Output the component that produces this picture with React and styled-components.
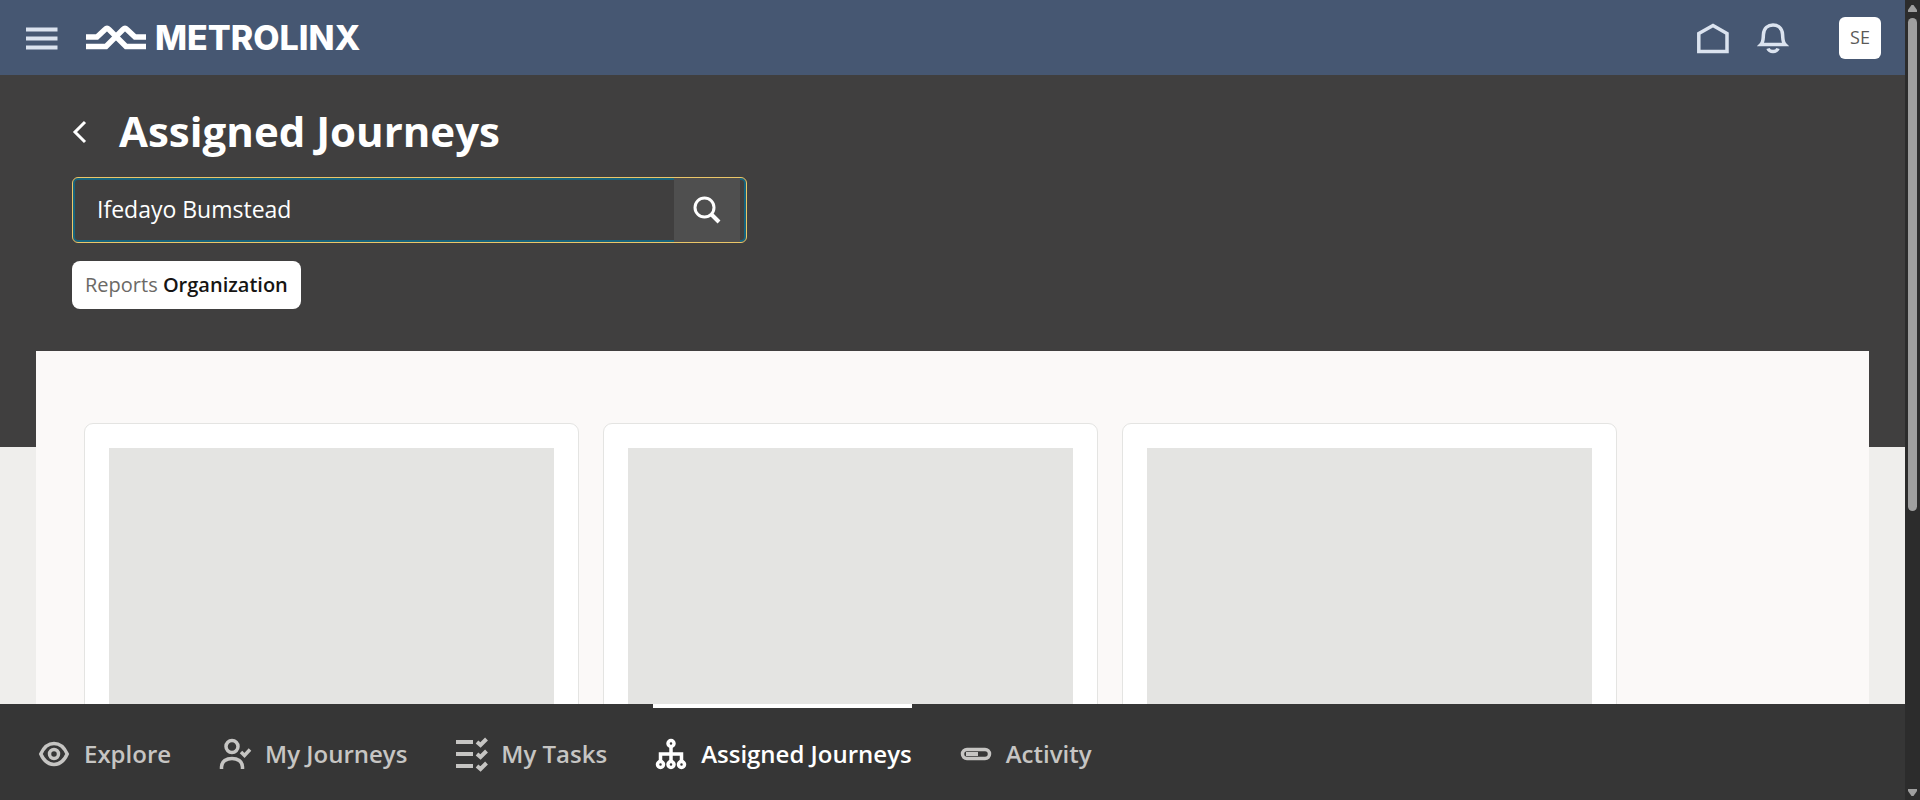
import React from "react";
import styled, { createGlobalStyle, css } from "styled-components";

const GlobalStyle = createGlobalStyle`
  * { box-sizing: border-box; }
  body { margin: 0; font-family: "Open Sans", "Noto Sans", sans-serif; background: #efeeec; }
  button, input { font: inherit; }
`;

const Shell = styled.div`
  display: flex;
  height: 100vh;
  overflow: hidden;
`;

const Page = styled.div`
  flex: 1;
  min-width: 0;
  display: flex;
  flex-direction: column;
`;

const IconButton = styled.button`
  display: flex;
  align-items: center;
  justify-content: center;
  flex: none;
  width: ${(p) => p.$width || 36}px;
  height: ${(p) => p.$height || 36}px;
  padding: 0;
  border: 0;
  color: ${(p) => p.$color || "#dbe3ef"};
  background: ${(p) => p.$background || "transparent"};
  cursor: pointer;
`;

const TopBar = styled.header`
  flex: none;
  display: flex;
  align-items: center;
  height: 75px;
  padding: 0 24px;
  background: #465772;
`;

const Brand = styled.a`
  display: flex;
  align-items: center;
  gap: 8px;
  margin-left: 25px;
  color: #fff;
  font: 800 34px/36px Inter, sans-serif;
  text-decoration: none;
`;

const TopActions = styled.div`
  display: flex;
  align-items: center;
  gap: 24px;
  margin-left: auto;
`;

const Avatar = styled.button`
  width: 42px;
  height: 42px;
  margin-left: 24px;
  padding: 0 0 2px;
  border: 0;
  border-radius: 6px;
  background: #fff;
  color: #5b5a58;
  font-size: 18px;
  font-weight: 500;
  line-height: 36px;
`;

const Content = styled.main`
  flex: 1;
  min-height: 0;
  overflow: hidden;
`;

const Hero = styled.section`
  padding: 24px 72px 138px;
  background: #403f3f;
`;

const TitleRow = styled.div`
  display: flex;
  align-items: center;
  gap: 32px;
  height: 66px;
  margin-bottom: 12px;
`;

const Title = styled.h1`
  margin: 0;
  padding-bottom: 2px;
  color: #fff;
  font-size: 42px;
  font-weight: 700;
  line-height: 48px;
`;

const SearchBox = styled.form`
  display: flex;
  width: 675px;
  max-width: 100%;
  height: 66px;
  padding-right: 6px;
  border: 1px solid #ecc668;
  border-radius: 6px;
  box-shadow: inset 0 0 0 2px #17647d;
`;

const SearchInput = styled.input`
  flex: 1;
  min-width: 0;
  padding: 0 24px 2px;
  border: 0;
  outline: 0;
  background: transparent;
  color: #fff;
  font-size: 23px;
`;

const Chip = styled.button`
  display: block;
  height: 48px;
  margin-top: 18px;
  padding: 0 13px;
  border: 0;
  border-radius: 8px;
  background: #fff;
  color: #6b6966;
  font-size: 20px;
  line-height: 46px;
`;

const ChipValue = styled.span`
  color: #161513;
  font-weight: 600;
`;

const Panel = styled.section`
  display: flex;
  gap: 24px;
  min-height: 600px;
  margin: -96px 36px 0;
  padding: 72px 48px;
  background: #fbf9f8;
`;

const Card = styled.article`
  flex: 0 1 495px;
  height: 494px;
  padding: 24px;
  border: 1px solid #e4e4e2;
  border-radius: 9px;
  background: #fff;
`;

const Placeholder = styled.div`
  height: 100%;
  background: #e4e4e2;
`;

const NavBar = styled.nav`
  flex: none;
  display: flex;
  gap: 46px;
  height: 96px;
  padding: 0 36px;
  background: #363636;
`;

const NavLink = styled.a`
  display: flex;
  align-items: center;
  gap: 12px;
  padding: 4px 0 0;
  color: #c6c5c3;
  font-size: 24px;
  font-weight: 600;
  line-height: 36px;
  white-space: nowrap;
  text-decoration: none;
  ${(p) => p.$active && css`
    color: #fff;
    box-shadow: inset 0 4px #fff;
  `}
`;

const ScrollTrack = styled.div`
  flex: none;
  display: flex;
  flex-direction: column;
  align-items: center;
  width: 15px;
  padding: 5px 0 4px;
  background: #2c2c2c;
`;

const ScrollThumb = styled.div`
  width: 9px;
  height: 62.3%;
  margin: 6px 0 auto;
  border-radius: 5px;
  background: #9f9f9f;
`;

const Svg = ({ w = 36, h = 36, sw = 3.5, children }) => (
  <svg width={w} height={h} viewBox={`0 0 ${w} ${h}`} fill="none" stroke="currentColor" strokeWidth={sw} aria-hidden="true">
    {children}
  </svg>
);

const MenuIcon = () => (
  <Svg sw={4}><path d="M2 9.500H33.500M2 18.500H33.500M2 27.500H33.500" /></Svg>
);

const LogoMark = () => (
  <Svg w={62} h={28} sw={5.5}>
    <path d="M1 13H12L20 5.500Q22 3.500 24 5.500L41 22.500H61" />
    <path d="M61 13H50L42 5.500Q40 3.500 38 5.500L21 22.500H1" />
  </Svg>
);

const HomeIcon = () => (
  <Svg><path d="M3.800 13.500L18 5.500L32 13.500V31.500H3.800Z" /></Svg>
);

const BellIcon = () => (
  <Svg>
    <path d="M6 24.500H30C27.500 22 28 19 27.500 14C27 8 23 5 18 5S9 8 8.500 14C8 19 8.500 22 6 24.500Z" />
    <path d="M13 28.500C14.500 32.500 21.500 32.500 23 28.500" sw={4} />
  </Svg>
);

const BackIcon = () => (
  <Svg w={15} h={24} sw={3}><path d="M13 2L3 12L13 22" /></Svg>
);

const SearchIcon = () => (
  <Svg sw={3}><circle cx="15.500" cy="15.500" r="9.500" /><path d="M22 22L30 30" strokeWidth="4" /></Svg>
);

const EyeIcon = () => (
  <Svg>
    <path d="M4.800 18C11 4 25 4 31.200 18C25 32 11 32 4.800 18Z" />
    <circle cx="18" cy="18" r="4.500" />
  </Svg>
);

const PersonCheckIcon = () => (
  <Svg>
    <circle cx="15" cy="10.500" r="6" />
    <path d="M4.500 33V31C4.500 19.500 25.500 19.500 25.500 31V33" />
    <path d="M24 16L27.500 19.500L33 13.500" />
  </Svg>
);

const TasksIcon = () => (
  <Svg>
    <path d="M3 6H20M3 18H20M3 30H20" strokeWidth="4" />
    <path d="M24 6L27.500 9L33.500 3M24 18L27.500 21L33.500 15M24 30L27.500 33L33.500 27" strokeWidth="4" />
  </Svg>
);

const OrgIcon = () => (
  <Svg>
    <circle cx="18" cy="7.500" r="3" />
    <circle cx="7.500" cy="28.500" r="3" />
    <circle cx="18" cy="28.500" r="3" />
    <circle cx="28.500" cy="28.500" r="3" />
    <path d="M18 10V26M7.500 26V18H28.500V26" />
  </Svg>
);

const ActivityIcon = () => (
  <Svg>
    <rect x="4.500" y="13.500" width="27" height="9" rx="4.500" />
    <path d="M8 18H20" strokeWidth="4" />
  </Svg>
);

const ArrowIcon = ({ down }) => (
  <svg width="9" height="7" viewBox="0 0 9 7" fill="#9f9f9f" aria-hidden="true">
    <path d={down ? "M0 0H9V2L5.500 7H3.500L0 2Z" : "M0 7H9V5L5.500 0H3.500L0 5Z"} />
  </svg>
);

const TABS = [
  { label: "Explore", Icon: EyeIcon },
  { label: "My Journeys", Icon: PersonCheckIcon },
  { label: "My Tasks", Icon: TasksIcon },
  { label: "Assigned Journeys", Icon: OrgIcon, active: true },
  { label: "Activity", Icon: ActivityIcon },
];

export default function App() {
  return (
    <Shell>
      <GlobalStyle />
      <Page>
        <TopBar>
          <IconButton aria-label="Menu"><MenuIcon /></IconButton>
          <Brand href="#"><LogoMark />METROLINX</Brand>
          <TopActions>
            <IconButton aria-label="Home"><HomeIcon /></IconButton>
            <IconButton aria-label="Notifications"><BellIcon /></IconButton>
            <Avatar>SE</Avatar>
          </TopActions>
        </TopBar>
        <Content>
          <Hero>
            <TitleRow>
              <IconButton $width={15} $color="#fff" aria-label="Back"><BackIcon /></IconButton>
              <Title>Assigned Journeys</Title>
            </TitleRow>
            <SearchBox onSubmit={(e) => e.preventDefault()}>
              <SearchInput aria-label="Search people" defaultValue="Ifedayo Bumstead" />
              <IconButton $width={66} $height={64} $color="#fff" $background="#4f4f4f" aria-label="Search"><SearchIcon /></IconButton>
            </SearchBox>
            <Chip>Reports <ChipValue>Organization</ChipValue></Chip>
          </Hero>
          <Panel>
            {[1, 2, 3].map((n) => (
              <Card key={n}><Placeholder /></Card>
            ))}
          </Panel>
        </Content>
        <NavBar>
          {TABS.map(({ label, Icon, active }) => (
            <NavLink key={label} href="#" $active={active}><Icon />{label}</NavLink>
          ))}
        </NavBar>
      </Page>
      <ScrollTrack>
        <ArrowIcon />
        <ScrollThumb />
        <ArrowIcon down />
      </ScrollTrack>
    </Shell>
  );
}
